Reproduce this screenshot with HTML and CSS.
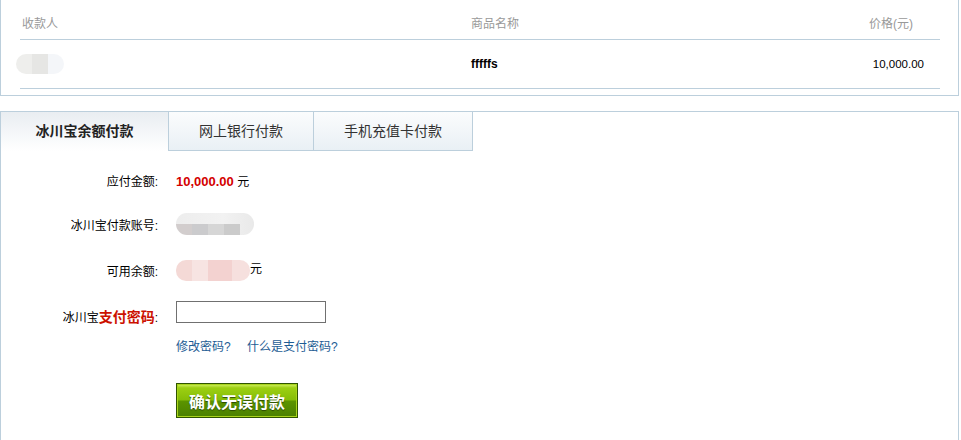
FILE: index.html
```html
<!DOCTYPE html>
<html lang="zh-CN">

<head>
    <meta charset="UTF-8">
    <meta name="viewport" content="width=device-width, initial-scale=1.0">
    <title>确认付款</title>
    <link rel="stylesheet" href="styles.css">
</head>

<body>
    <div class="order-box">
        <div class="order-row order-head">
            <div class="col-payee">收款人</div>
            <div class="col-name">商品名称</div>
            <div class="col-price">价格(元)</div>
        </div>
        <div class="order-row order-data">
            <div class="col-payee"><span class="blur blur-payee"></span></div>
            <div class="col-name"><strong>fffffs</strong></div>
            <div class="col-price">10,000.00</div>
        </div>
    </div>

    <div class="pay-box">
        <div class="tabs">
            <div class="tab active">冰川宝余额付款</div>
            <div class="tab tab-bank">网上银行付款</div>
            <div class="tab tab-card">手机充值卡付款</div>
        </div>

        <div class="pay-form">
            <div class="form-row row-amount">
                <div class="label">应付金额:</div>
                <div class="value"><span class="amount">10,000.00</span> 元</div>
            </div>
            <div class="form-row row-account">
                <div class="label">冰川宝付款账号:</div>
                <div class="value"><span class="blur blur-account"></span></div>
            </div>
            <div class="form-row row-balance">
                <div class="label">可用余额:</div>
                <div class="value"><span class="blur blur-balance"></span>元</div>
            </div>
            <div class="form-row row-password">
                <div class="label">冰川宝<span class="pw-key">支付密码</span>:</div>
                <div class="value"><input type="password" class="pw-input"></div>
            </div>
            <div class="form-row row-links">
                <div class="label"></div>
                <div class="value">
                    <a href="#" class="link">修改密码?</a>
                    <a href="#" class="link">什么是支付密码?</a>
                </div>
            </div>
            <div class="form-row row-submit">
                <div class="label"></div>
                <div class="value"><button class="submit-btn">确认无误付款</button></div>
            </div>
        </div>
    </div>
</body>

</html>
```

FILE: styles.css
```css
body {
    margin: 0;
    padding: 0;
    background-color: #fff;
    font-family: "Liberation Sans", "Noto Sans CJK SC", sans-serif;
    font-size: 12px;
    color: #000;
}

/* Order summary */
.order-box {
    width: 959px;
    height: 96px;
    box-sizing: border-box;
    border: 1px solid #bccfdc;
    border-top: none;
    padding: 0 18px 0 19px;
}

.order-row {
    display: grid;
    grid-template-columns: 451px 1fr 200px;
    border-bottom: 1px solid #bccfdc;
}

.order-head {
    height: 40px;
    padding-top: 16px;
    box-sizing: border-box;
    line-height: 16px;
    color: #999;
}

.order-data {
    height: 49px;
    box-sizing: border-box;
    align-items: center;
    padding-bottom: 1px;
}

.col-payee {
    padding-left: 2px;
}

.col-price {
    text-align: right;
    padding-right: 27px;
}

.order-data .col-price {
    padding-right: 16px;
    font-size: 11.5px;
}

.order-data .col-payee {
    padding-left: 0;
    margin-left: -4px;
}

/* Blurred private data */
.blur {
    display: inline-block;
    vertical-align: middle;
}

.blur-payee {
    width: 48px;
    height: 20px;
    border-radius: 10px;
    background: linear-gradient(to right, #eeeeec 0 16px, #e6e6e4 16px 32px, #f4f6f9 32px);
}

.blur-account {
    width: 78px;
    height: 22px;
    border-radius: 11px;
    background:
        linear-gradient(to right, #d2cdcd 0 16px, #cbcbcd 16px 32px, #d6d6d6 32px 48px, #cbcbcb 48px 64px, transparent 64px) 0 11px / 100% 11px no-repeat,
        linear-gradient(to right, #ededed, #f2f2f2 60%, #e9e9e9);
}

.blur-balance {
    width: 74px;
    height: 21px;
    border-radius: 10px;
    background: linear-gradient(to right, #f4d9d6 0 16px, #f7e4e2 16px 32px, #f3d2d0 32px 56px, #f6e0de 56px);
}

/* Payment box */
.pay-box {
    width: 959px;
    box-sizing: border-box;
    margin-top: 15px;
    border: 1px solid #bccfdc;
    padding-bottom: 40px;
}

.tabs {
    display: flex;
    height: 39px;
}

.tab {
    height: 39px;
    box-sizing: border-box;
    border-right: 1px solid #bccfdc;
    border-bottom: 1px solid #bccfdc;
    background: linear-gradient(to bottom, #fbfcfd, #e9f0f5);
    font-size: 14px;
    line-height: 38px;
    text-align: center;
    color: #333;
}

.tab.active {
    width: 168px;
    border-bottom: none;
    background: linear-gradient(to bottom, #e9edf1, #f6f8fa 60%, #fff);
    font-weight: bold;
    color: #222;
}

.tab-bank {
    width: 145px;
}

.tab-card {
    width: 159px;
}

/* Form */
.pay-form {
    padding-top: 17px;
}

.form-row {
    display: flex;
    align-items: center;
}

.label {
    width: 157px;
    flex-shrink: 0;
    text-align: right;
    color: #000;
}

.value {
    margin-left: 18px;
}

.row-amount {
    height: 24px;
}

.row-account {
    height: 24px;
    margin-top: 20px;
}

.row-balance {
    height: 24px;
    margin-top: 22px;
}

.row-password {
    height: 22px;
    margin-top: 19px;
    align-items: flex-end;
}

.row-password .label {
    position: relative;
    top: 3px;
}

.row-links {
    height: 22px;
    margin-top: 11px;
}

.row-submit {
    margin-top: 27px;
}

.amount {
    color: #d40000;
    font-weight: bold;
    font-size: 13px;
}

.pw-key {
    color: #cc1100;
    font-weight: bold;
    font-size: 14px;
}

.pw-input {
    display: block;
    width: 150px;
    height: 22px;
    box-sizing: border-box;
    margin: 0;
    border: 1px solid #707070;
    padding: 0 3px;
}

.link {
    color: #1d5c94;
    text-decoration: none;
}

.link + .link {
    margin-left: 13px;
}

.submit-btn {
    display: block;
    width: 122px;
    height: 35px;
    padding: 0;
    border: 1px solid #2f5500;
    box-shadow: inset 0 0 0 1px #a9d41c;
    background: linear-gradient(to bottom, #d6f26a 0, #9ccf12 12%, #86bd08 48%, #5b9400 52%, #4a8000 100%);
    color: #fff;
    font-family: "Noto Sans CJK SC", sans-serif;
    font-size: 16px;
    font-weight: bold;
    text-shadow: 0 1px 1px #2a4a00;
    cursor: pointer;
}
```
